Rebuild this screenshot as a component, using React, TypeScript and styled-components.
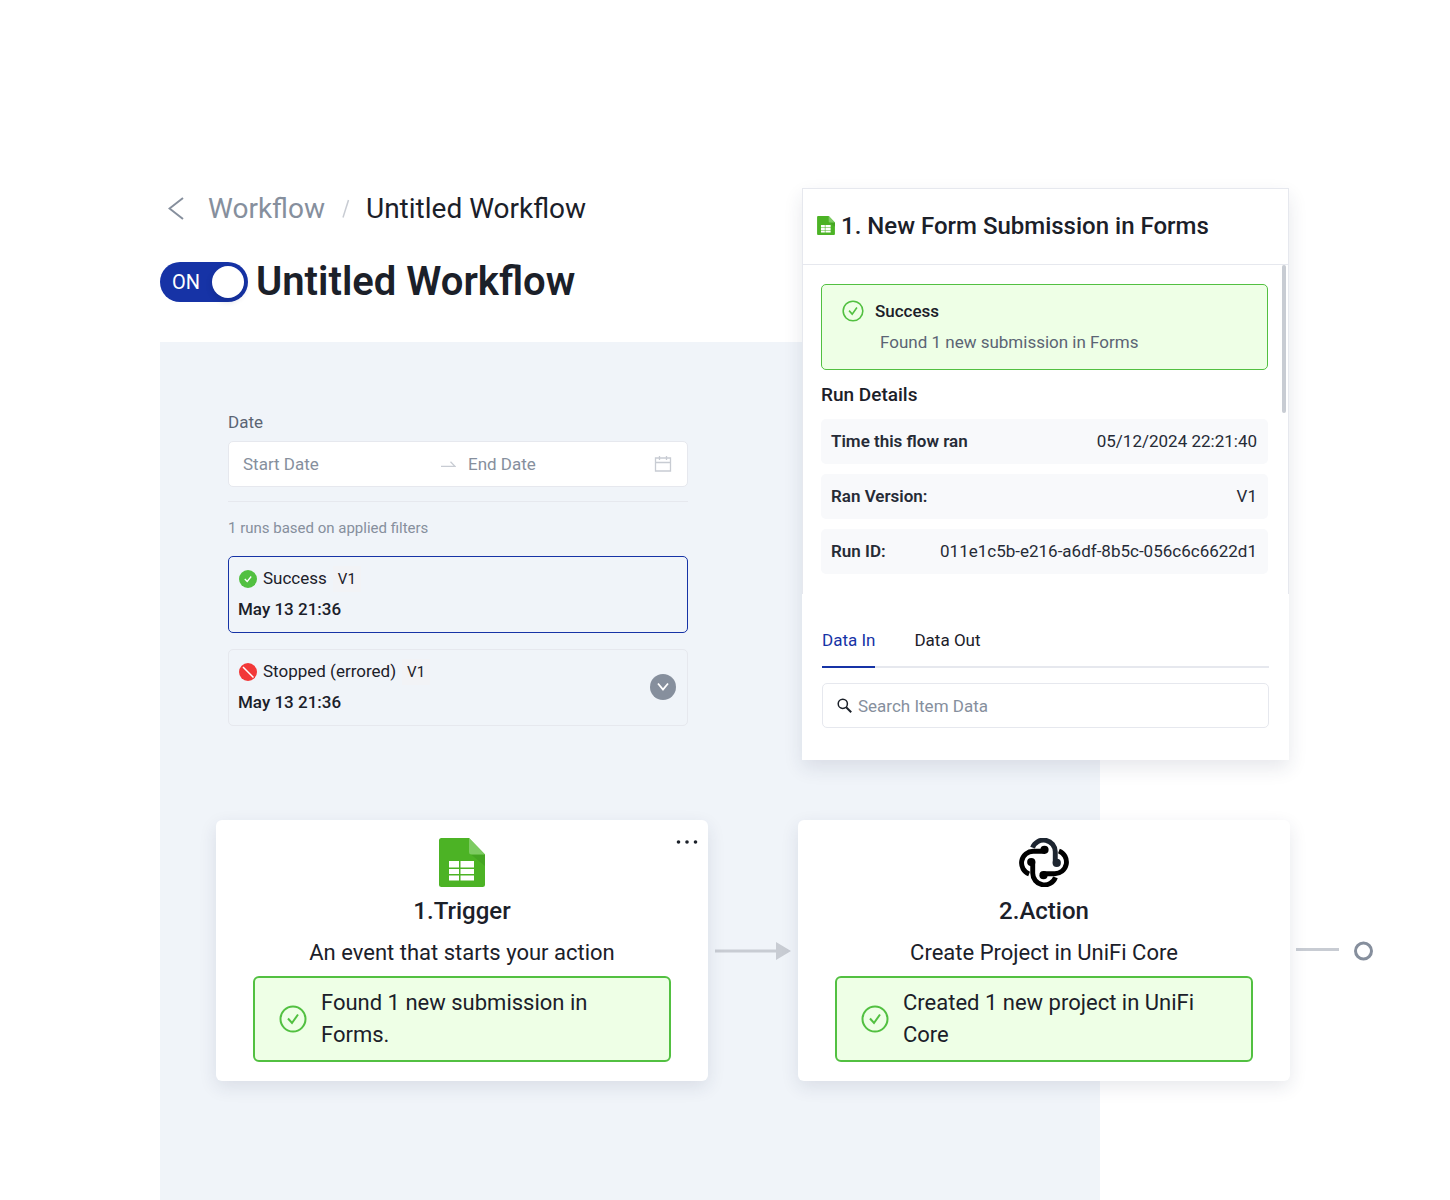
import React, { useState } from "react";
import styled, { createGlobalStyle } from "styled-components";

const color = {
  ink: "#1b2029",
  body: "#262b36",
  slate: "#5b6474",
  grey: "#868f9d",
  faint: "#c8ccd3",
  line: "#e6e8ee",
  canvas: "#f0f4f9",
  blue: "#1633a6",
  green: "#52c041",
  greenFill: "#eeffe6",
  red: "#f23838",
};

const GlobalStyle = createGlobalStyle`
  *, *::before, *::after { box-sizing: border-box; }
  body {
    margin: 0;
    background: #fff;
    color: ${color.ink};
    font-family: Roboto, "Liberation Sans", sans-serif;
    font-size: 17px;
    line-height: 24px;
  }
  h1, h2, h3, p, ul, ol, dl, dd, dt { margin: 0; padding: 0; }
  ul, ol { list-style: none; }
  button, input { font: inherit; color: inherit; }
  button { background: none; border: 0; padding: 0; cursor: pointer; }
  svg { display: block; flex: none; }
`;

const Page = styled.main`
  display: grid;
  grid-template-columns: 160px minmax(460px, 1fr) 298px 189px 161px;
  grid-template-rows: auto auto 1fr;
  min-height: 100vh;
`;

const Backdrop = styled.div`
  grid-column: 2 / 4;
  grid-row: 2 / 4;
  background: ${color.canvas};
`;

/* ---------- header ---------- */

const Header = styled.header`
  grid-column: 2;
  grid-row: 1;
  padding: 191px 0 40px;
`;

const Breadcrumb = styled.nav`
  display: flex;
  align-items: center;
  gap: 16px;
  font-size: 28px;
  line-height: 36px;
  white-space: nowrap;
`;

const BackButton = styled.button`
  display: grid;
  place-items: center;
  width: 32px;
  height: 36px;
`;

const CrumbLink = styled.a`
  color: ${color.grey};
  text-decoration: none;
`;

const TitleRow = styled.div`
  display: flex;
  align-items: center;
  gap: 8px;
  margin-top: 35px;
`;

const Title = styled.h1`
  font-size: 40px;
  line-height: 40px;
  font-weight: 600;
  white-space: nowrap;
`;

const Switch = styled.label<{ $on: boolean }>`
  display: flex;
  flex: none;
  flex-direction: ${(p) => (p.$on ? "row" : "row-reverse")};
  align-items: center;
  justify-content: space-between;
  width: 88px;
  height: 40px;
  padding: ${(p) => (p.$on ? "0 4px 0 12px" : "0 12px 0 4px")};
  border-radius: 20px;
  background: ${(p) => (p.$on ? color.blue : color.grey)};
  color: #fff;
  font-size: 20px;
  cursor: pointer;
`;

const SwitchInput = styled.input`
  appearance: none;
  width: 32px;
  height: 32px;
  margin: 0;
  border-radius: 50%;
  background: #fff;
  box-shadow: 0 3px 6px rgba(0, 20, 60, 0.2);
  cursor: pointer;
`;

/* ---------- run filters ---------- */

const Runs = styled.section`
  grid-column: 2;
  grid-row: 2;
  width: 528px;
  max-width: 100%;
  padding: 68px 0 94px 68px;
`;

const FieldLabel = styled.label`
  display: block;
  color: ${color.slate};
`;

const DateRange = styled.div`
  display: grid;
  grid-template-columns: 31fr 15px 29fr 18px;
  align-items: center;
  gap: 12px;
  height: 46px;
  margin-top: 7px;
  padding: 0 15px 0 14px;
  border: 1px solid ${color.line};
  border-radius: 5px;
  background: #fff;
`;

const TextInput = styled.input`
  flex: 1;
  min-width: 0;
  padding: 0;
  border: 0;
  outline: 0;
  background: none;
  &::placeholder { color: ${color.grey}; opacity: 1; }
`;

const RunCount = styled.p`
  margin: 14px 0 16px;
  padding-top: 14px;
  border-top: 1px solid ${color.line};
  color: ${color.grey};
  font-size: 15px;
`;

const RunList = styled.ul`
  display: grid;
  gap: 16px;
`;

const RunCard = styled.li<{ $active?: boolean }>`
  display: flex;
  align-items: center;
  justify-content: space-between;
  padding: 6px 11px 7px 9px;
  border: 1px solid ${(p) => (p.$active ? color.blue : color.line)};
  border-radius: 5px;
  line-height: 31px;
`;

const RunStatus = styled.div`
  display: flex;
  align-items: center;
  gap: 6px;
  padding-left: 1px;
`;

const Version = styled.span`
  padding: 0 5px;
  background: #f2f3f6;
  font-size: 15px;
  line-height: 26px;
`;

const RunTime = styled.p`
  font-weight: 500;
`;

const ExpandButton = styled.button`
  display: grid;
  place-items: center;
  width: 26px;
  height: 26px;
  border-radius: 50%;
  background: ${color.grey};
`;

/* ---------- details panel ---------- */

const Panel = styled.aside`
  grid-column: 3 / 5;
  grid-row: 1 / 3;
  align-self: start;
  margin: 188px 0 60px;
  background: #fff;
  box-shadow: 0 8px 18px rgba(35, 45, 85, 0.11);
`;

const PanelTop = styled.div`
  position: relative;
  border: 1px solid ${color.line};
  border-bottom: 0;
`;

const PanelHeader = styled.header`
  display: flex;
  align-items: center;
  gap: 6px;
  height: 76px;
  padding: 0 14px 2px;
  border-bottom: 1px solid ${color.line};
`;

const PanelTitle = styled.h2`
  font-size: 24px;
  line-height: 32px;
  font-weight: 500;
  white-space: nowrap;
`;

const ScrollThumb = styled.div`
  position: absolute;
  top: 76px;
  right: 2px;
  width: 4px;
  height: 148px;
  border-radius: 2px;
  background: ${color.faint};
`;

const PanelBody = styled.div`
  padding: 19px 20px 20px 18px;
`;

const SuccessNote = styled.div`
  display: grid;
  grid-template-columns: 22px 1fr;
  column-gap: 11px;
  align-items: center;
  height: 86px;
  padding: 10px 20px 11px;
  border: 1px solid ${color.green};
  border-radius: 5px;
  background: ${color.greenFill};
`;

const NoteTitle = styled.h3`
  font-size: 17px;
  font-weight: 500;
`;

const NoteText = styled.p`
  grid-column: 2;
  padding-left: 5px;
  color: ${color.slate};
`;

const SectionTitle = styled.h3`
  margin: 13px 0 12px;
  font-size: 19px;
  font-weight: 500;
`;

const Details = styled.dl`
  display: grid;
  gap: 10px;
`;

const DetailRow = styled.div`
  display: flex;
  align-items: center;
  justify-content: space-between;
  height: 45px;
  padding: 0 11px 2px 10px;
  border-radius: 5px;
  background: #f8f9fb;
  color: ${color.body};
`;

const Term = styled.dt`
  font-weight: 600;
`;

const PanelBottom = styled.div`
  padding: 34px 20px 32px;
`;

const Tabs = styled.div`
  display: flex;
  gap: 39px;
  box-shadow: inset 0 -2px ${color.line};
`;

const Tab = styled.button<{ $active: boolean }>`
  padding-bottom: 14px;
  border-bottom: 2px solid ${(p) => (p.$active ? color.blue : "transparent")};
  color: ${(p) => (p.$active ? color.blue : color.ink)};
`;

const SearchBox = styled.label`
  display: flex;
  align-items: center;
  gap: 6px;
  height: 45px;
  margin-top: 15px;
  padding: 0 14px;
  border: 1px solid ${color.line};
  border-radius: 5px;
`;

/* ---------- flow diagram ---------- */

const Flow = styled.section`
  grid-column: 2 / 6;
  grid-row: 3;
  display: flex;
  align-items: center;
  align-self: start;
  padding: 0 76px 60px 56px;
`;

const Node = styled.article`
  position: relative;
  display: flex;
  flex: 1 1 0;
  flex-direction: column;
  align-items: center;
  min-width: 0;
  padding: 18px 37px 19px;
  border-radius: 6px;
  background: #fff;
  box-shadow: 0 6px 18px rgba(35, 45, 85, 0.11);
  font-size: 22px;
  line-height: 32px;
`;

const MoreButton = styled.button`
  position: absolute;
  top: 12px;
  right: 8px;
  display: grid;
  place-items: center;
  width: 26px;
  height: 20px;
`;

const NodeTitle = styled.h2`
  margin-top: 8px;
  font-size: 24px;
  font-weight: 500;
`;

const NodeText = styled.p`
  margin: 10px 0 7px;
`;

const NodeResult = styled.div`
  display: flex;
  align-items: center;
  gap: 14px;
  width: 100%;
  padding: 9px 24px;
  border: 2px solid ${color.green};
  border-radius: 6px;
  background: ${color.greenFill};
`;

const Connector = styled.div`
  flex: none;
  padding: 0 7px;
`;

const Tail = styled.div`
  flex: none;
  padding-left: 6px;
`;

/* ---------- icons ---------- */

const SheetIcon = ({ width, height }: { width: number; height: number }) => (
  <svg width={width} height={height} viewBox="0 0 46 49" aria-hidden="true">
    <path d="M2.500 0H30L46 16.500V46.500a2.500 2.500 0 0 1-2.500 2.500H2.500A2.500 2.500 0 0 1 0 46.500V2.500A2.500 2.500 0 0 1 2.500 0z" fill="#4cb325" />
    <path d="M32 16.500H46V28z" fill="#44a522" />
    <path d="M30 0 46 16.500H32.500A2.500 2.500 0 0 1 30 14z" fill="#7dcb62" />
    <path d="M10 23h10v6.500H10zM21.500 23H35v6.500H21.500zM10 31h10v5H10zM21.500 31H35v5H21.500zM10 37.500h10V42.500H10zM21.500 37.500H35V42.500H21.500z" fill="#fff" />
  </svg>
);

const KnotIcon = () => (
  <svg width="50" height="49" viewBox="0 0 50 50" aria-hidden="true">
    {[0, 90, 180, 270].map((turn) => (
      <g key={turn} transform={`rotate(${turn} 25 25)`}>
        <path
          d="M13.300 9.800A12 12 0 0 1 36.500 14.300V26"
          fill="none"
          stroke={turn === 0 ? "#1d2530" : "#000"}
          strokeWidth="5"
        />
        <circle cx="38" cy="25.500" r="4.200" fill={turn === 0 ? "#1d2530" : "#000"} />
      </g>
    ))}
  </svg>
);

const CheckRing = ({ size }: { size: number }) => (
  <svg width={size} height={size} viewBox="0 0 28 28" fill="none" stroke={color.green} strokeWidth="2" aria-hidden="true">
    <circle cx="14" cy="14" r="12.500" />
    <path d="M9 13.500l4 4.500 6-8.500" />
  </svg>
);

const SuccessDot = () => (
  <svg width="18" height="18" viewBox="0 0 18 18" aria-hidden="true">
    <circle cx="9" cy="9" r="9" fill={color.green} />
    <path d="M5.800 9l2.400 2.500 4-5" fill="none" stroke="#fff" strokeWidth="1.300" />
  </svg>
);

const StoppedDot = () => (
  <svg width="18" height="18" viewBox="0 0 18 18" aria-hidden="true">
    <circle cx="9" cy="9" r="9" fill={color.red} />
    <path d="M4 4l10.500 10.500" stroke="#fff" strokeWidth="1.500" />
  </svg>
);

const CalendarIcon = () => (
  <svg width="18" height="18" viewBox="0 0 18 18" fill="none" stroke={color.faint} strokeWidth="1.300" aria-hidden="true">
    <path d="M1.500 3h15v13h-15zM1.500 7.500h15M5.500 1v4M12.500 1v4" />
  </svg>
);

const RangeArrow = () => (
  <svg width="15" height="8" viewBox="0 0 15 8" fill="none" stroke={color.faint} strokeWidth="1.300" aria-hidden="true">
    <path d="M0 6.300h14L9.500 1.800" />
  </svg>
);

/* ---------- view ---------- */

const details = [
  ["Time this flow ran", "05/12/2024 22:21:40"],
  ["Ran Version:", "V1"],
  ["Run ID:", "011e1c5b-e216-a6df-8b5c-056c6c6622d1"],
];

export default function App() {
  const [on, setOn] = useState(true);
  const [tab, setTab] = useState("Data In");

  return (
    <>
      <GlobalStyle />
      <Page>
        <Backdrop />

        <Header>
          <Breadcrumb aria-label="Breadcrumb">
            <BackButton aria-label="Back">
              <svg width="16" height="24" viewBox="0 0 16 24" fill="none" stroke={color.grey} strokeWidth="2">
                <path d="M15 1 1.500 11.500 15 22" />
              </svg>
            </BackButton>
            <CrumbLink href="#workflow">Workflow</CrumbLink>
            <svg width="9" height="20" viewBox="0 0 9 20" stroke={color.faint} strokeWidth="1.500" aria-hidden="true">
              <path d="M7.500 1 2 18.500" />
            </svg>
            <span>Untitled Workflow</span>
          </Breadcrumb>
          <TitleRow>
            <Switch $on={on}>
              {on ? "ON" : "OFF"}
              <SwitchInput type="checkbox" role="switch" checked={on} onChange={() => setOn(!on)} />
            </Switch>
            <Title>Untitled Workflow</Title>
          </TitleRow>
        </Header>

        <Runs>
          <FieldLabel htmlFor="start-date">Date</FieldLabel>
          <DateRange>
            <TextInput id="start-date" placeholder="Start Date" />
            <RangeArrow />
            <TextInput aria-label="End Date" placeholder="End Date" />
            <CalendarIcon />
          </DateRange>
          <RunCount>1 runs based on applied filters</RunCount>
          <RunList>
            <RunCard $active>
              <div>
                <RunStatus>
                  <SuccessDot />
                  Success
                  <Version>V1</Version>
                </RunStatus>
                <RunTime>May 13 21:36</RunTime>
              </div>
            </RunCard>
            <RunCard>
              <div>
                <RunStatus>
                  <StoppedDot />
                  Stopped (errored)
                  <Version>V1</Version>
                </RunStatus>
                <RunTime>May 13 21:36</RunTime>
              </div>
              <ExpandButton aria-label="Expand run">
                <svg width="12" height="10" viewBox="0 0 12 10" fill="none" stroke="#fff" strokeWidth="1.800">
                  <path d="M1 1.500l5 6 5-6" />
                </svg>
              </ExpandButton>
            </RunCard>
          </RunList>
        </Runs>

        <Panel>
          <PanelTop>
            <PanelHeader>
              <SheetIcon width={18} height={19} />
              <PanelTitle>1. New Form Submission in Forms</PanelTitle>
            </PanelHeader>
            <ScrollThumb />
            <PanelBody>
              <SuccessNote>
                <CheckRing size={22} />
                <NoteTitle>Success</NoteTitle>
                <NoteText>Found 1 new submission in Forms</NoteText>
              </SuccessNote>
              <SectionTitle>Run Details</SectionTitle>
              <Details>
                {details.map(([term, value]) => (
                  <DetailRow key={term}>
                    <Term>{term}</Term>
                    <dd>{value}</dd>
                  </DetailRow>
                ))}
              </Details>
            </PanelBody>
          </PanelTop>
          <PanelBottom>
            <Tabs role="tablist">
              {["Data In", "Data Out"].map((name) => (
                <Tab key={name} role="tab" aria-selected={tab === name} $active={tab === name} onClick={() => setTab(name)}>
                  {name}
                </Tab>
              ))}
            </Tabs>
            <SearchBox>
              <svg width="15" height="15" viewBox="0 0 15 15" fill="none" stroke={color.ink} strokeWidth="1.500" aria-hidden="true">
                <circle cx="5.800" cy="5.800" r="4.600" />
                <path d="M9.200 9.200l5 5" strokeWidth="2" />
              </svg>
              <TextInput aria-label="Search Item Data" placeholder="Search Item Data" />
            </SearchBox>
          </PanelBottom>
        </Panel>

        <Flow>
          <Node>
            <MoreButton aria-label="More options">
              <svg width="22" height="4" viewBox="0 0 22 4" fill={color.ink}>
                <circle cx="2.500" cy="2" r="1.800" />
                <circle cx="11" cy="2" r="1.800" />
                <circle cx="19.500" cy="2" r="1.800" />
              </svg>
            </MoreButton>
            <SheetIcon width={46} height={49} />
            <NodeTitle>1.Trigger</NodeTitle>
            <NodeText>An event that starts your action</NodeText>
            <NodeResult>
              <CheckRing size={28} />
              <p>Found 1 new submission in Forms.</p>
            </NodeResult>
          </Node>
          <Connector>
            <svg width="76" height="18" viewBox="0 0 76 18" fill={color.faint} aria-hidden="true">
              <path d="M0 7.500h61V0l15 9-15 9v-7.500H0z" />
            </svg>
          </Connector>
          <Node>
            <KnotIcon />
            <NodeTitle>2.Action</NodeTitle>
            <NodeText>Create Project in UniFi Core</NodeText>
            <NodeResult>
              <CheckRing size={28} />
              <p>Created 1 new project in UniFi Core</p>
            </NodeResult>
          </Node>
          <Tail>
            <svg width="78" height="20" viewBox="0 0 78 20" fill="none" aria-hidden="true">
              <path d="M0 8.500h43" stroke={color.faint} strokeWidth="3" />
              <circle cx="67.500" cy="10" r="8" stroke={color.grey} strokeWidth="3" />
            </svg>
          </Tail>
        </Flow>
      </Page>
    </>
  );
}
